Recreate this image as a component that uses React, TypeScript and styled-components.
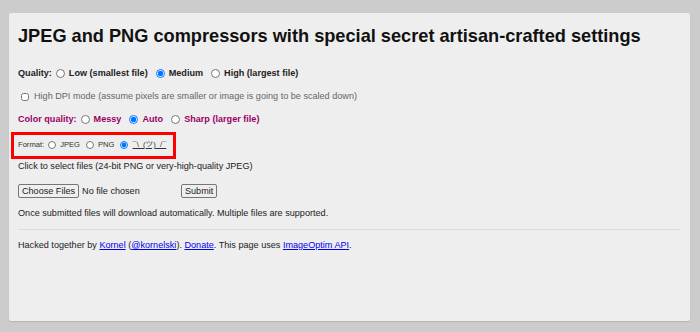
import React from 'react';
import styled, { createGlobalStyle } from 'styled-components';

const GlobalStyle = createGlobalStyle`
  html, body {
    margin: 0;
    padding: 0;
  }
  body {
    background: #cccccc;
    font-family: 'Liberation Sans', Arial, sans-serif;
    font-size: 9.1px;
    color: #222;
  }
`;

const Page = styled.div`
  min-height: 100vh;
  box-sizing: border-box;
  padding: 13px 10px 11px 9px;
  display: flex;
  flex-direction: column;
`;

const Card = styled.div`
  flex: 1;
  background: #eeeeee;
  border-radius: 2px;
  box-shadow: 0 1px 1px rgba(0, 0, 0, 0.12);
  padding: 0 9px;
  display: flex;
  flex-direction: column;
`;

const Title = styled.h1`
  margin: 12px 0 0;
  font-size: 18.2px;
  line-height: 22px;
  font-weight: bold;
  color: #111;
`;

const Row = styled.div<{ $top?: number; $bold?: boolean; $tone?: string }>`
  margin-top: ${(p) => p.$top ?? 10}px;
  height: 13px;
  line-height: 13px;
  display: flex;
  align-items: center;
  white-space: nowrap;
  font-weight: ${(p) => (p.$bold ? 'bold' : 'normal')};
  color: ${(p) => p.$tone ?? '#222'};
`;

const Label = styled.label<{ $gap?: number }>`
  display: inline-flex;
  align-items: center;
  margin-right: ${(p) => p.$gap ?? 4}px;
`;

const Radio = styled.input.attrs({ type: 'radio' })<{ $size?: number }>`
  width: ${(p) => p.$size ?? 9}px;
  height: ${(p) => p.$size ?? 9}px;
  margin: 0 4px 0 4px;
`;

const Check = styled.input.attrs({ type: 'checkbox' })`
  width: 8px;
  height: 8px;
  margin: 0 5px 0 3px;
`;

const FormatBox = styled.div`
  margin: 6px 0 0 -7px;
  width: fit-content;
  border: 3px solid #ff0000;
  padding: 2px 7px 4px 4px;
  height: 15px;
  line-height: 15px;
  display: flex;
  align-items: center;
  font-size: 7.6px;
  color: #333;
  white-space: nowrap;
`;

const Shrug = styled.span`
  font-family: 'Liberation Sans', 'Noto Sans CJK JP', sans-serif;
  text-decoration: underline;
`;

const FileRow = styled.div`
  margin-top: 11px;
  height: 14px;
  display: flex;
  align-items: center;
`;

const FileInput = styled.input.attrs({ type: 'file', multiple: true })`
  width: 159px;
  font-family: 'Liberation Sans', Arial, sans-serif;
  font-size: 9.1px;
  color: #222;
  &::file-selector-button {
    font-family: 'Liberation Sans', Arial, sans-serif;
    font-size: 9.1px;
    height: 14px;
    padding: 0 3px;
    margin-right: 3px;
    background: #efefef;
    border: 1px solid #767676;
    border-radius: 2px;
    color: #222;
  }
`;

const Submit = styled.button`
  margin-left: 4px;
  font-family: 'Liberation Sans', Arial, sans-serif;
  font-size: 9.1px;
  height: 14px;
  padding: 0 3px;
  background: #efefef;
  border: 1px solid #767676;
  border-radius: 2px;
  color: #222;
`;

const Rule = styled.hr`
  margin: 9px 0 0;
  border: 0;
  border-top: 1px solid #dddddd;
`;

const A = styled.a`
  color: #0000ee;
  text-decoration: underline;
`;

export default function App() {
  return (
    <>
      <GlobalStyle />
      <Page>
        <Card>
          <Title>JPEG and PNG compressors with special secret artisan-crafted settings</Title>

          <Row $top={20} $bold>
            Quality:
            <Label>
              <Radio name="q" />Low (smallest file)
            </Label>
            <Label>
              <Radio name="q" defaultChecked />Medium
            </Label>
            <Label>
              <Radio name="q" />High (largest file)
            </Label>
          </Row>

          <Row $tone="#666">
            <Label>
              <Check />High DPI mode (assume pixels are smaller or image is going to be scaled down)
            </Label>
          </Row>

          <Row $bold $tone="#990066">
            Color quality:
            <Label>
              <Radio name="c" />Messy
            </Label>
            <Label>
              <Radio name="c" defaultChecked />Auto
            </Label>
            <Label>
              <Radio name="c" />Sharp (larger file)
            </Label>
          </Row>

          <FormatBox>
            Format:
            <Label $gap={2}>
              <Radio name="f" $size={8} />JPEG
            </Label>
            <Label $gap={2}>
              <Radio name="f" $size={8} />PNG
            </Label>
            <Label $gap={0}>
              <Radio name="f" $size={8} defaultChecked />
              <Shrug>¯\_(ツ)_/¯</Shrug>
            </Label>
          </FormatBox>

          <Row $top={1}>Click to select files (24-bit PNG or very-high-quality JPEG)</Row>

          <FileRow>
            <FileInput />
            <Submit>Submit</Submit>
          </FileRow>

          <Row $top={9}>Once submitted files will download automatically. Multiple files are supported.</Row>

          <Rule />

          <Row $top={9}>
            <span>
              Hacked together by <A href="#">Kornel</A> (<A href="#">@kornelski</A>).{' '}
              <A href="#">Donate</A>. This page uses <A href="#">ImageOptim API</A>.
            </span>
          </Row>
        </Card>
      </Page>
    </>
  );
}
